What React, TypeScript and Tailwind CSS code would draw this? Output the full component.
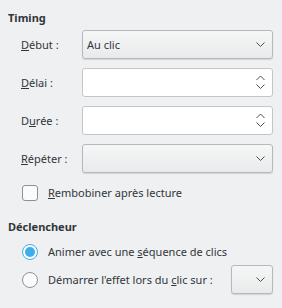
import React from "react";

const Chevron = () => (
  <svg width="9" height="5" viewBox="0 0 9 5" className="block">
    <path d="M0.5 0.5 L4.5 4.5 L8.5 0.5" fill="none" stroke="#4d4f51" strokeWidth="1" />
  </svg>
);

const SpinArrows = () => (
  <svg width="9" height="15" viewBox="0 0 9 15" className="block">
    <path d="M0.5 5 L4.5 1 L8.5 5" fill="none" stroke="#4d4f51" strokeWidth="1" />
    <path d="M0.5 9.5 L4.5 13.5 L8.5 9.5" fill="none" stroke="#4d4f51" strokeWidth="1" />
  </svg>
);

const Combo = ({ text, className = "" }: { text?: string; className?: string }) => (
  <div
    className={
      "flex items-center justify-between rounded-[3px] border border-[#b6b8ba] bg-gradient-to-b from-[#f5f6f6] to-[#e9eaeb] shadow-[0_1px_1px_rgba(0,0,0,0.12)] pl-[4px] pr-[7px] " +
      className
    }
  >
    <span>{text ?? ""}</span>
    <Chevron />
  </div>
);

const Spin = () => (
  <div className="flex h-[29px] items-center justify-end rounded-[3px] border border-[#c3c5c7] bg-white pr-[7px]">
    <SpinArrows />
  </div>
);

const Row = ({ label, children }: { label: React.ReactNode; children: React.ReactNode }) => (
  <div className="flex h-[29px] items-center">
    <div className="w-[61px] pl-[13px] shrink-0 box-content">{label}</div>
    <div className="flex-1">{children}</div>
  </div>
);

export default function App() {
  return (
    <div
      className="w-[282px] h-[308px] bg-[#eff0f1] text-[#31363b] text-[11px] leading-[16px] pl-[8px] pr-[9px] pt-[10px]"
      style={{ fontFamily: '"Noto Sans", sans-serif' }}
    >
      <div className="font-bold h-[16px]">Timing</div>
      <div className="mt-[4px] flex flex-col gap-[9px]">
        <Row label={<span><u>D</u>ébut :</span>}>
          <Combo text="Au clic" className="h-[29px]" />
        </Row>
        <Row label={<span><u>D</u>élai :</span>}>
          <Spin />
        </Row>
        <Row label={<span>D<u>u</u>rée :</span>}>
          <Spin />
        </Row>
        <Row label={<span><u>R</u>épéter :</span>}>
          <Combo className="h-[29px]" />
        </Row>
      </div>
      <div className="mt-[12px] flex items-center h-[16px] pl-[14px]">
        <div className="w-[16px] h-[16px] rounded-[3px] border border-[#8e9193] bg-[#fbfbfb]" />
        <span className="ml-[10px]"><u>R</u>embobiner après lecture</span>
      </div>
      <div className="mt-[18px] font-bold h-[16px]">Déclencheur</div>
      <div className="mt-[9px] flex items-center h-[16px] pl-[14px]">
        <div className="w-[16px] h-[16px] rounded-full border border-[#3daee9] bg-white flex items-center justify-center">
          <div className="w-[10px] h-[10px] rounded-full bg-[#3daee9]" />
        </div>
        <span className="ml-[10px]">Animer avec une <u>s</u>équence de clics</span>
      </div>
      <div className="mt-[5px] flex items-center h-[29px] pl-[14px]">
        <div className="w-[16px] h-[16px] rounded-full border border-[#8e9193] bg-[#fbfbfb]" />
        <span className="ml-[10px]">Démarrer l'effet lors du <u>c</u>lic sur :</span>
        <div className="flex-1" />
        <Combo className="h-[29px] w-[42px]" />
      </div>
    </div>
  );
}
